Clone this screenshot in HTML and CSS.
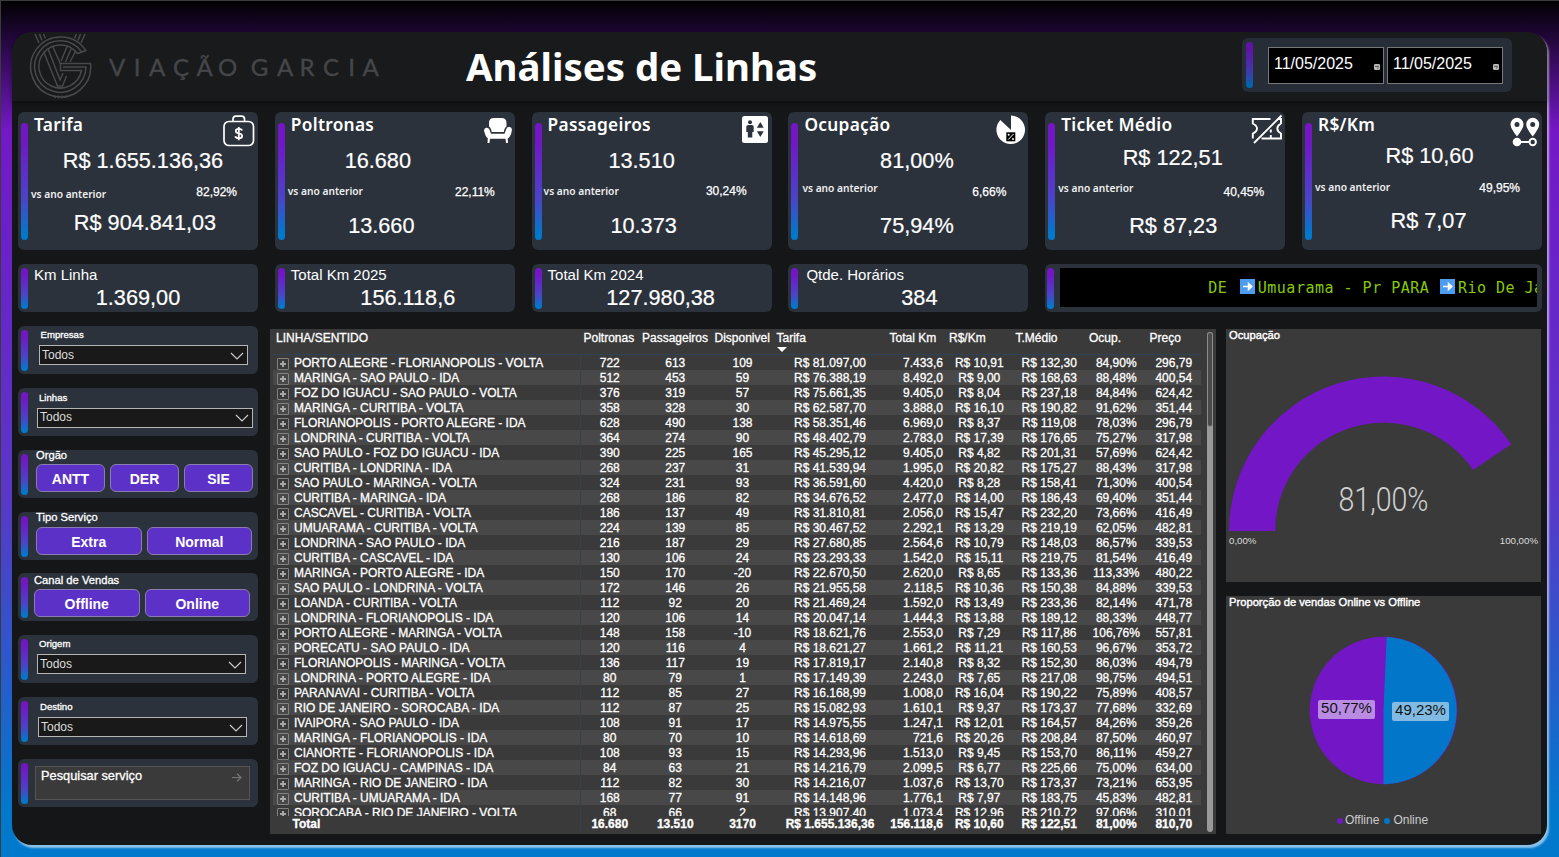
FILE: index.html
```html
<!DOCTYPE html>
<html lang="pt-BR">
<head>
<meta charset="utf-8">
<title>Análises de Linhas</title>
<link rel="stylesheet" href="styles.css">
</head>
<body>
<main class="panel">
<header class="top">
  <svg class="logo" width="352" height="68" viewBox="28 33 352 68">
    <g fill="none" stroke="#48494b" stroke-width="1.500">
      <path d="M85.800 50.500A30 30 0 1 0 90.500 63.500H60.500V70.500H81.500A21.500 21.500 0 1 1 77.500 53.500Z"/>
      <path d="M81.500 52A25.700 25.700 0 1 0 86 67H63"/>
      <path d="M43.500 51.500L57.500 86H62.500L66.500 76M48 48.500L60 80L63 73M52.500 46L60.500 64M76 50.500L70 62M71.500 48L65.500 62M67.500 45.500L61 61"/>
      <path d="M35 34L39 43M39.500 34L42 40.500M43.500 34L45.500 38.500M85 34L81 43M80.500 34L78 40.500M76.500 34L74.500 38.500"/>
      <path d="M54 95.500L55.500 98M58.500 95.500V98.500M62 95.500V98.500M66 95.500L65 98"/>
    </g>
    <text class="logo-text" y="75.500" x="117 137 157 181 204.500 227.500 259.500 285 307 331 351.500 370.500">VIAÇÃOGARCIA</text>
  </svg>
  <h1>Análises de Linhas</h1>
  <div class="dates">
    <i class="bar"></i>
    <div class="date"><span>11/05/2025</span><svg width="6" height="6" viewBox="0 0 6 6"><rect width="6" height="6" rx="1.300" fill="#bbb"/><path d="M1 2.300H5M3 4H4.500" stroke="#333" stroke-width=".8"/></svg></div>
    <div class="date"><span>11/05/2025</span><svg width="6" height="6" viewBox="0 0 6 6"><rect width="6" height="6" rx="1.300" fill="#bbb"/><path d="M1 2.300H5M3 4H4.500" stroke="#333" stroke-width=".8"/></svg></div>
  </div>
</header>

<section class="cards">
  <article class="card kpi k-tarifa"><i class="bar"></i><h2>Tarifa</h2>
    <svg class="ico" width="32" height="32" viewBox="0 0 32 32" fill="none" stroke="#fff"><rect x="1" y="6.500" width="29.500" height="24" rx="5" stroke-width="1.700"/><path d="M10 6V4Q10 1.200 13 1.200H18.500Q21.500 1.200 21.500 4V6" stroke-width="1.700"/><path d="M19 15.500Q18.500 13.800 15.800 13.800Q12.800 13.800 12.800 16Q12.800 18 15.800 18.300Q19.100 18.700 19.100 21Q19.100 23.300 15.800 23.300Q12.800 23.300 12.300 21.300M15.800 12V25.200" stroke-width="1.800"/></svg>
    <b class="v1">R$ 1.655.136,36</b><span class="vs">vs ano anterior</span><span class="pct">82,92%</span><b class="v2">R$ 904.841,03</b></article>
  <article class="card kpi k-polt"><i class="bar"></i><h2>Poltronas</h2>
    <svg class="ico" width="30" height="27" viewBox="0 0 30 27" fill="#fff"><path d="M6 6Q6 1 11 1H18.500Q23.500 1 23.500 6V9.500Q21.500 10.500 20.800 15H8.700Q8 10.500 6 9.500Z"/><path d="M1 13.500A2.800 2.800 0 0 1 6.300 12.300L8 16.800H21.500L23.200 12.300A2.800 2.800 0 0 1 28.800 13.500Q28.500 17.500 26.500 20Q25.500 21.300 24.700 21.300L25 26H23L22.500 21.700H7L6.500 26H4.500L4.800 21.300Q2.500 20 1 13.500Z"/></svg>
    <b class="v1">16.680</b><span class="vs">vs ano anterior</span><span class="pct">22,11%</span><b class="v2">13.660</b></article>
  <article class="card kpi k-pass"><i class="bar"></i><h2>Passageiros</h2>
    <svg class="ico" width="26" height="27" viewBox="0 0 26 27"><rect width="26" height="27" rx="2.500" fill="#fff"/><g fill="#2b323c"><circle cx="8" cy="6.300" r="2"/><path d="M4.300 11Q4.300 9 6.300 9H9.800Q11.700 9 11.700 11V16H10.300V21.500H5.800V16H4.300ZM18.300 6L21.700 11.700H14.900ZM18.300 21L21.700 15.300H14.900Z"/></g></svg>
    <b class="v1">13.510</b><span class="vs">vs ano anterior</span><span class="pct">30,24%</span><b class="v2">10.373</b></article>
  <article class="card kpi k-ocup"><i class="bar"></i><h2>Ocupação</h2>
    <svg class="ico" width="30" height="30" viewBox="0 0 30 30"><path d="M15 15V.500A14.300 14.300 0 1 1 4.300 5Z" fill="#fff"/><rect x="10.300" y="17.300" width="9" height="9" fill="#000"/><path d="M12.300 24.500L17.500 19" stroke="#fff"/><circle cx="12.700" cy="19.800" r="1" fill="#fff"/><circle cx="17" cy="23.900" r="1" fill="#fff"/></svg>
    <b class="v1">81,00%</b><span class="vs">vs ano anterior</span><span class="pct">6,66%</span><b class="v2">75,94%</b></article>
  <article class="card kpi k-ticket"><i class="bar"></i><h2>Ticket Médio</h2>
    <svg class="ico" width="32" height="30" viewBox="0 0 32 30" fill="none" stroke="#fff" stroke-width="1.900"><path d="M19.500 5H1.800V9.500Q6 11.500 6 14.500T1.800 19.500V24.500M26.500 5H30V9.500Q26.300 11.500 26.300 14.500T30 19.500V24.500H10.500M19.800 15.500V18.500M19.800 21V24M3 29L30.500 1.500"/></svg>
    <b class="v1">R$ 122,51</b><span class="vs">vs ano anterior</span><span class="pct">40,45%</span><b class="v2">R$ 87,23</b></article>
  <article class="card kpi k-rkm"><i class="bar"></i><h2>R$/Km</h2>
    <svg class="ico" width="30" height="30" viewBox="0 0 30 30"><path fill="#fff" fill-rule="evenodd" d="M7 .800A6.500 6.500 0 0 1 13.500 7.300Q13.500 11.500 7 19.500Q.500 11.500 .500 7.300A6.500 6.500 0 0 1 7 .800ZM7 5A2.500 2.500 0 1 0 7 10A2.500 2.500 0 0 0 7 5ZM22.700 .800A6.500 6.500 0 0 1 29.200 7.300Q29.200 11.500 22.700 19.500Q16.200 11.500 16.200 7.300A6.500 6.500 0 0 1 22.700 .800ZM22.700 5A2.500 2.500 0 1 0 22.700 10A2.500 2.500 0 0 0 22.700 5Z"/><circle cx="7" cy="25" r="4.300" fill="#fff"/><path d="M10 25H19.500" stroke="#fff" stroke-width="2"/><circle cx="22.700" cy="25" r="3.200" fill="none" stroke="#fff" stroke-width="2"/></svg>
    <b class="v1">R$ 10,60</b><span class="vs">vs ano anterior</span><span class="pct">49,95%</span><b class="v2">R$ 7,07</b></article>

  <article class="card mini m-linha"><i class="bar"></i><h3>Km Linha</h3><b>1.369,00</b></article>
  <article class="card mini m-2025"><i class="bar"></i><h3>Total Km 2025</h3><b>156.118,6</b></article>
  <article class="card mini m-2024"><i class="bar"></i><h3>Total Km 2024</h3><b>127.980,38</b></article>
  <article class="card mini m-qtde"><i class="bar"></i><h3>Qtde. Horários</h3><b>384</b></article>
  <article class="card ticker"><i class="bar"></i><div class="screen"><span>DE </span><svg width="15" height="15" viewBox="0 0 15 15"><rect width="15" height="15" fill="#4c9cf0"/><path d="M3 7.500H10M8.500 4.500L11.800 7.500L8.500 10.500Z" stroke="#fff" stroke-width="1.500" fill="#fff"/></svg><span>Umuarama - Pr PARA </span><svg width="15" height="15" viewBox="0 0 15 15"><rect width="15" height="15" fill="#4c9cf0"/><path d="M3 7.500H10M8.500 4.500L11.800 7.500L8.500 10.500Z" stroke="#fff" stroke-width="1.500" fill="#fff"/></svg><span>Rio De Ja</span></div></article>
</section>

<section class="body">
<aside class="filters">
  <div class="card filter f-emp"><i class="bar"></i><label>Empresas</label><div class="select">Todos<svg width="14" height="8" viewBox="0 0 14 8"><path d="M1 1L7 7L13 1"/></svg></div></div>
  <div class="card filter f-lin"><i class="bar"></i><label>Linhas</label><div class="select">Todos<svg width="14" height="8" viewBox="0 0 14 8"><path d="M1 1L7 7L13 1"/></svg></div></div>
  <div class="card filter f-org"><i class="bar"></i><label>Orgão</label><div class="btns"><button>ANTT</button><button>DER</button><button>SIE</button></div></div>
  <div class="card filter f-tipo"><i class="bar"></i><label>Tipo Serviço</label><div class="btns"><button>Extra</button><button>Normal</button></div></div>
  <div class="card filter f-canal"><i class="bar"></i><label>Canal de Vendas</label><div class="btns"><button>Offline</button><button>Online</button></div></div>
  <div class="card filter f-ori"><i class="bar"></i><label>Origem</label><div class="select">Todos<svg width="14" height="8" viewBox="0 0 14 8"><path d="M1 1L7 7L13 1"/></svg></div></div>
  <div class="card filter f-des"><i class="bar"></i><label>Destino</label><div class="select">Todos<svg width="14" height="8" viewBox="0 0 14 8"><path d="M1 1L7 7L13 1"/></svg></div></div>
  <div class="card filter"><i class="bar"></i><div class="search">Pesquisar serviço<svg width="10" height="9" viewBox="0 0 10 9"><path d="M0 4.500H9M5 .800L9 4.500L5 8.200" fill="none" stroke="#777" stroke-width="1.200"/></svg></div></div>
</aside>

<div class="matrix">
<table>
<thead><tr><th>LINHA/SENTIDO<th>Poltronas<th>Passageiros<th>Disponivel<th class="sorted">Tarifa<th>Total Km<th>R$/Km<th>T.Médio<th>Ocup.<th>Preço</thead>
<tbody>
<tr><td>PORTO ALEGRE - FLORIANOPOLIS - VOLTA<td>722<td>613<td>109<td>R$ 81.097,00<td>7.433,6<td>R$ 10,91<td>R$ 132,30<td>84,90%<td>296,79
<tr><td>MARINGA - SAO PAULO - IDA<td>512<td>453<td>59<td>R$ 76.388,19<td>8.492,0<td>R$ 9,00<td>R$ 168,63<td>88,48%<td>400,54
<tr><td>FOZ DO IGUACU - SAO PAULO - VOLTA<td>376<td>319<td>57<td>R$ 75.661,35<td>9.405,0<td>R$ 8,04<td>R$ 237,18<td>84,84%<td>624,42
<tr><td>MARINGA - CURITIBA - VOLTA<td>358<td>328<td>30<td>R$ 62.587,70<td>3.888,0<td>R$ 16,10<td>R$ 190,82<td>91,62%<td>351,44
<tr><td>FLORIANOPOLIS - PORTO ALEGRE - IDA<td>628<td>490<td>138<td>R$ 58.351,46<td>6.969,0<td>R$ 8,37<td>R$ 119,08<td>78,03%<td>296,79
<tr><td>LONDRINA - CURITIBA - VOLTA<td>364<td>274<td>90<td>R$ 48.402,79<td>2.783,0<td>R$ 17,39<td>R$ 176,65<td>75,27%<td>317,98
<tr><td>SAO PAULO - FOZ DO IGUACU - IDA<td>390<td>225<td>165<td>R$ 45.295,12<td>9.405,0<td>R$ 4,82<td>R$ 201,31<td>57,69%<td>624,42
<tr><td>CURITIBA - LONDRINA - IDA<td>268<td>237<td>31<td>R$ 41.539,94<td>1.995,0<td>R$ 20,82<td>R$ 175,27<td>88,43%<td>317,98
<tr><td>SAO PAULO - MARINGA - VOLTA<td>324<td>231<td>93<td>R$ 36.591,60<td>4.420,0<td>R$ 8,28<td>R$ 158,41<td>71,30%<td>400,54
<tr><td>CURITIBA - MARINGA - IDA<td>268<td>186<td>82<td>R$ 34.676,52<td>2.477,0<td>R$ 14,00<td>R$ 186,43<td>69,40%<td>351,44
<tr><td>CASCAVEL - CURITIBA - VOLTA<td>186<td>137<td>49<td>R$ 31.810,81<td>2.056,0<td>R$ 15,47<td>R$ 232,20<td>73,66%<td>416,49
<tr><td>UMUARAMA - CURITIBA - VOLTA<td>224<td>139<td>85<td>R$ 30.467,52<td>2.292,1<td>R$ 13,29<td>R$ 219,19<td>62,05%<td>482,81
<tr><td>LONDRINA - SAO PAULO - IDA<td>216<td>187<td>29<td>R$ 27.680,85<td>2.564,6<td>R$ 10,79<td>R$ 148,03<td>86,57%<td>339,53
<tr><td>CURITIBA - CASCAVEL - IDA<td>130<td>106<td>24<td>R$ 23.293,33<td>1.542,0<td>R$ 15,11<td>R$ 219,75<td>81,54%<td>416,49
<tr><td>MARINGA - PORTO ALEGRE - IDA<td>150<td>170<td>-20<td>R$ 22.670,50<td>2.620,0<td>R$ 8,65<td>R$ 133,36<td>113,33%<td>480,22
<tr><td>SAO PAULO - LONDRINA - VOLTA<td>172<td>146<td>26<td>R$ 21.955,58<td>2.118,5<td>R$ 10,36<td>R$ 150,38<td>84,88%<td>339,53
<tr><td>LOANDA - CURITIBA - VOLTA<td>112<td>92<td>20<td>R$ 21.469,24<td>1.592,0<td>R$ 13,49<td>R$ 233,36<td>82,14%<td>471,78
<tr><td>LONDRINA - FLORIANOPOLIS - IDA<td>120<td>106<td>14<td>R$ 20.047,14<td>1.444,3<td>R$ 13,88<td>R$ 189,12<td>88,33%<td>448,77
<tr><td>PORTO ALEGRE - MARINGA - VOLTA<td>148<td>158<td>-10<td>R$ 18.621,76<td>2.553,0<td>R$ 7,29<td>R$ 117,86<td>106,76%<td>557,81
<tr><td>PORECATU - SAO PAULO - IDA<td>120<td>116<td>4<td>R$ 18.621,27<td>1.661,2<td>R$ 11,21<td>R$ 160,53<td>96,67%<td>353,72
<tr><td>FLORIANOPOLIS - MARINGA - VOLTA<td>136<td>117<td>19<td>R$ 17.819,17<td>2.140,8<td>R$ 8,32<td>R$ 152,30<td>86,03%<td>494,79
<tr><td>LONDRINA - PORTO ALEGRE - IDA<td>80<td>79<td>1<td>R$ 17.149,39<td>2.243,0<td>R$ 7,65<td>R$ 217,08<td>98,75%<td>494,51
<tr><td>PARANAVAI - CURITIBA - VOLTA<td>112<td>85<td>27<td>R$ 16.168,99<td>1.008,0<td>R$ 16,04<td>R$ 190,22<td>75,89%<td>408,57
<tr><td>RIO DE JANEIRO - SOROCABA - IDA<td>112<td>87<td>25<td>R$ 15.082,93<td>1.610,1<td>R$ 9,37<td>R$ 173,37<td>77,68%<td>332,69
<tr><td>IVAIPORA - SAO PAULO - IDA<td>108<td>91<td>17<td>R$ 14.975,55<td>1.247,1<td>R$ 12,01<td>R$ 164,57<td>84,26%<td>359,26
<tr><td>MARINGA - FLORIANOPOLIS - IDA<td>80<td>70<td>10<td>R$ 14.618,69<td>721,6<td>R$ 20,26<td>R$ 208,84<td>87,50%<td>460,97
<tr><td>CIANORTE - FLORIANOPOLIS - IDA<td>108<td>93<td>15<td>R$ 14.293,96<td>1.513,0<td>R$ 9,45<td>R$ 153,70<td>86,11%<td>459,27
<tr><td>FOZ DO IGUACU - CAMPINAS - IDA<td>84<td>63<td>21<td>R$ 14.216,79<td>2.099,5<td>R$ 6,77<td>R$ 225,66<td>75,00%<td>634,00
<tr><td>MARINGA - RIO DE JANEIRO - IDA<td>112<td>82<td>30<td>R$ 14.216,07<td>1.037,6<td>R$ 13,70<td>R$ 173,37<td>73,21%<td>653,95
<tr><td>CURITIBA - UMUARAMA - IDA<td>168<td>77<td>91<td>R$ 14.148,96<td>1.776,1<td>R$ 7,97<td>R$ 183,75<td>45,83%<td>482,81
<tr><td>SOROCABA - RIO DE JANEIRO - VOLTA<td>68<td>66<td>2<td>R$ 13.907,40<td>1.073,4<td>R$ 12,96<td>R$ 210,72<td>97,06%<td>310,01
</tbody>
<tfoot><tr><td>Total<td>16.680<td>13.510<td>3170<td>R$ 1.655.136,36<td>156.118,6<td>R$ 10,60<td>R$ 122,51<td>81,00%<td>810,70</tfoot>
</table>
<div class="scroll"><i></i></div>
</div>

<aside class="charts">
  <div class="chart gauge"><h4>Ocupação</h4>
    <svg width="315" height="225" viewBox="0 0 315 225">
      <path d="M3 174A154.500 154.500 0 0 1 285.300 87.200L247.100 113.100A108.300 108.300 0 0 0 49.200 174Z" fill="#7216c6"/>
      <text class="g-val" x="112.500" y="154" textLength="90" lengthAdjust="spacingAndGlyphs">81,00%</text>
      <text class="g-lim" x="3" y="187">0,00%</text><text class="g-lim" x="312" y="187" text-anchor="end">100,00%</text>
    </svg></div>
  <div class="chart pie"><h4>Proporção de vendas Online vs Offline</h4>
    <svg width="315" height="190" viewBox="0 0 315 190">
      <circle cx="157.500" cy="100.500" r="73.700" fill="#7216c6"/>
      <path d="M157.500 100.500L160.700 26.900A73.700 73.700 0 0 1 157.500 174.200Z" fill="#0277c9"/>
      <rect x="92" y="90" width="57" height="19" rx="2" fill="#fff" fill-opacity=".5"/><rect x="166" y="92" width="57" height="19" rx="2" fill="#fff" fill-opacity=".5"/>
      <text class="p-lab" x="120.500" y="103">50,77%</text><text class="p-lab" x="194.500" y="105">49,23%</text>
    </svg>
    <div class="legend"><i class="off"></i>Offline<i class="on"></i>Online</div></div>
</aside>
</section>
</main>
</body>
</html>
```
FILE: styles.css
```css
*{box-sizing:border-box;margin:0;padding:0}
body{width:1559px;height:857px;overflow:hidden;padding:31px 12px 0 11px;border-top:1px solid #3b3b3b;border-left:1px solid #3b3b3b;font-family:"Liberation Sans",Arial,sans-serif;color:#fff;background:linear-gradient(#000 0,#7418c6 130px,#6a22c8 250px,#5a36c8 490px,#0079cc 815px)}
.panel{width:1535px;height:813px;background:#151618;border-radius:20px;box-shadow:2px 2.5px 2px rgba(255,255,255,.55)}
.bar{display:block;width:7px;border-radius:4px;background:linear-gradient(#7216c6 0,#7216c6 15%,#4a44c8 65%,#0079cc 95%)}
.card{display:flex;background:#2b323c;border-radius:6px}

.top{height:69px;display:flex;align-items:flex-start;background:#191a1c;border-radius:20px 20px 0 0;box-shadow:0 2px 4px rgba(0,0,0,.4)}
.logo{margin:1px 0 0 16px}
.logo-text{font:400 24px Lato,sans-serif;fill:#454649;stroke:#454649;stroke-width:.4px;text-anchor:middle}
h1{margin:-1px 0 0 86px;width:420px;font:700 38.4px/70px "Noto Sans",sans-serif;white-space:nowrap}
.dates{margin:6px 35px 0 auto;width:270px;height:54px;padding:4px 9px 0 4px;display:flex;gap:3px;background:#262d37;border-radius:6px}
.dates .bar{height:46px;margin-right:12px;filter:brightness(.85)}
.date{width:116px;height:37px;margin-top:5px;padding:0 3px 3px 5px;display:flex;justify-content:space-between;align-items:center;background:#000;border:1px solid #777;font-size:16px}
.date svg{margin-top:6px}

.cards{padding:11px 5px 0 6px;display:grid;grid-template-columns:repeat(6,240px);grid-template-rows:138px 48px;gap:14px 16.8px}
.kpi{display:grid;grid-template-columns:3px 7px 110px 1fr;grid-template-rows:28px 42px 18px 50px;align-items:start}
.kpi .bar{grid-column:2;grid-row:1/5;height:117px;margin-top:11px}
.kpi h2{grid-column:3/5;grid-row:1;margin:-1px 0 0 6px;font:600 17.3px/28px "Noto Sans",sans-serif;letter-spacing:.3px}
.ico{grid-column:4;grid-row:1;justify-self:end;margin:var(--im)}
.v1,.v2{grid-column:1/5;text-align:center;font-weight:400;font-size:21.7px;line-height:24px;-webkit-text-stroke:.2px #fff}
.v1{grid-row:2;margin:var(--v1)}
.v2{grid-row:4;margin:var(--v2)}
.vs{grid-column:3;grid-row:3;margin:var(--vs);font:600 10.2px/13px "Noto Sans",sans-serif;white-space:nowrap;color:#eee}
.pct{grid-column:4;grid-row:3;justify-self:end;margin:var(--pct);font-size:12px;line-height:16px;-webkit-text-stroke:.25px #fff}
.k-tarifa{--im:3px 3px 0 0;--v1:9px 0 0 10px;--v2:11px 0 0 14px;--vs:6px 0 0 3px;--pct:2px 21px 0 0}
.k-polt{--im:5px 2px 0 0;--v1:9px 34px 0 0;--v2:14px 27px 0 0;--vs:3px 0 0 3px;--pct:2px 20px 0 0}
.k-pass{--im:4px 4px 0 0;--v1:9px 20px 0 0;--v2:14px 16px 0 0;--vs:3px 0 0 2px;--pct:1px 25px 0 0}
.k-ocup{--im:3px 2px 0 0;--v1:9px 0 0 17px;--v2:14px 0 0 17px;--vs:0 0 0 4px;--pct:2px 22px 0 0}
.k-ticket{--im:2px 2px 0 0;--v1:6px 0 0 15px;--v2:14px 0 0 16px;--vs:0 0 0 3px;--pct:2px 21px 0 0}
.k-rkm{--im:5px 2px 0 0;--v1:4px 0 0 15px;--v2:9px 0 0 13px;--vs:-1px 0 0 3px;--pct:-2px 22px 0 0}
.mini{display:grid;grid-template-columns:3px 7px 1fr;grid-template-rows:21px 24px;align-items:start}
.mini .bar{grid-column:2;grid-row:1/3;height:41px;margin-top:4px}
.mini h3{grid-column:3;margin:2px 0 0 6px;font-weight:400;font-size:15px;line-height:18px}
.mini b{grid-column:1/4;grid-row:2;font-weight:400;font-size:21.7px;line-height:25px;text-align:center;-webkit-text-stroke:.2px #fff}
.m-2025 b{margin-left:26px}
.m-2024 b{margin-left:18px}
.m-qtde b{margin-left:22px}
.m-qtde h3{margin-left:8px}
.ticker{grid-column:5/7;padding:4px 5px 0 2px}
.ticker .bar{height:41px;margin-right:6px;flex:none}
.screen{width:478px;height:39px;padding-left:148px;display:flex;align-items:center;overflow:hidden;white-space:pre;background:#000;color:#86cb04;font:15px "DejaVu Sans Mono",monospace;letter-spacing:.5px}
.screen svg{flex:none;margin:0 3px 2px 3px}
.screen svg+span+svg{margin-left:1px}

.body{display:flex;padding:14px 5px 0 6px}
.filters{width:240px;display:flex;flex-direction:column;gap:13.86px}
.filter{height:48px;display:grid;grid-template-columns:3px 7px 1fr;grid-template-rows:18px 30px;align-items:start}
.filter .bar{grid-column:2;grid-row:1/3;height:41px;margin-top:4px}
label{grid-column:3;font-size:9.6px;line-height:12px;margin:3px 0 0 12.5px;-webkit-text-stroke:.3px #fff}
.select{grid-column:3;grid-row:2;width:209px;height:20px;margin:1px 0 0 11px;padding:0 3px 1px 2px;display:flex;justify-content:space-between;align-items:center;background:#191919;border:1px solid #b5b5b5;font-size:12px;color:#ddd}
.select path{fill:none;stroke:#ccc;stroke-width:1.2}
.select svg{margin-top:2px}
.f-lin .select{width:216px;margin:2px 0 0 9px}
.f-lin label{margin:4px 0 0 11px}
.f-ori .select{margin:1px 0 0 9px}
.f-ori label{margin:3px 0 0 11px}
.f-des .select{margin:2px 0 0 10px}
.f-des label{margin:4px 0 0 12px}
.f-org label,.f-tipo label,.f-canal label{font-size:11.2px;margin:-1px 0 0 8px}
.f-canal label{margin:1px 0 0 6px}
.btns{grid-column:3;grid-row:2;display:flex;gap:5px;margin:-4px 5px 0 8px}
.f-tipo .btns{margin:-3px 6px 0 8px}
.f-canal .btns{margin:-2.5px 8px 0 6px}
button{flex:1;height:28px;padding-top:2px;background:#5c31c8;border:1px solid #8a7cae;border-radius:6px;color:#fff;font:bold 14px "Liberation Sans",Arial,sans-serif}
.search{grid-column:3;grid-row:1/3;width:215px;height:34px;margin:7px 0 0 7px;padding:2px 7px 0 5px;display:flex;justify-content:space-between;background:#3a3a3a;border:1px solid #555;font-size:12.8px;line-height:14px;-webkit-text-stroke:.3px #fff}
.search svg{margin-top:4px}

.matrix{width:946px;height:505px;margin:3px 10px 0 12px;padding-left:3px;display:flex;background:#3a3a3a}
table,thead,tbody,tfoot{display:block}
table{width:928px;font-size:12px;line-height:17px;color:#fff;-webkit-text-stroke:.3px #fff}
tr{display:grid;grid-template-columns:307.5px 58.5px 72.5px 62px 113px 59.5px 66.5px 73.5px 60.5px 54.5px;height:15px}
thead tr{height:26px;border-bottom:1px solid #2f4256}
th{font-weight:400;text-align:left;padding:1px 0 0 3px;white-space:nowrap}
th:first-child{padding-left:3px}
.sorted::after{content:"";display:block;width:0;border:5px solid transparent;border-top-color:#fff;border-bottom:0}
tbody{height:461px;overflow:hidden}
td{height:15px;text-align:center;white-space:nowrap}
td:first-child{text-align:left;padding-left:19.5px;border-right:1px solid #34414e}
tbody td:first-child{display:flex;padding-left:4px}
tbody td:first-child::before{content:"";width:10px;height:10px;margin:3px 5px 0 0;border:1px solid #8e8e8e;border-radius:1px;background:linear-gradient(#bbb,#bbb) center/6px 2px no-repeat,linear-gradient(#bbb,#bbb) center/2px 6px no-repeat;opacity:.85}
td:nth-child(6){text-align:right;padding-right:3px}
tbody tr:nth-child(even){background:#484848}
tfoot{font-weight:700}
.scroll{width:6px;height:500px;margin:3px 0 0 6px;background:#999;border-radius:3px}
.scroll i{display:block;height:95px;background:#4a4a4a;border:1px solid #8c8c8c;border-radius:3px}

.charts{width:315px;margin-top:3px;display:flex;flex-direction:column;gap:14px}
.chart{background:#3a3a3a}
.gauge{height:253px}
.pie{height:238px}
h4{height:14px;padding-left:3px;font-weight:400;font-size:11.2px;line-height:13px;-webkit-text-stroke:.4px #fff}
.gauge svg,.pie svg{display:block}
.gauge svg{margin-top:14px}
.g-val{font:300 33px Roboto,sans-serif;fill:#d0d0d0}
.g-lim{font-size:9.7px;fill:#ddd}
.p-lab{font-size:15px;fill:#111;text-anchor:middle}
.legend{margin-top:11px;display:flex;align-items:center;justify-content:center;font-size:12px;line-height:18px;color:#ccc;padding-right:2px}
.legend i{width:6px;height:6px;margin:2px 2px 0 0;border-radius:50%;background:#7216c6}
.legend .on{background:#0277c9;margin-left:5px;margin-right:3px}
```
